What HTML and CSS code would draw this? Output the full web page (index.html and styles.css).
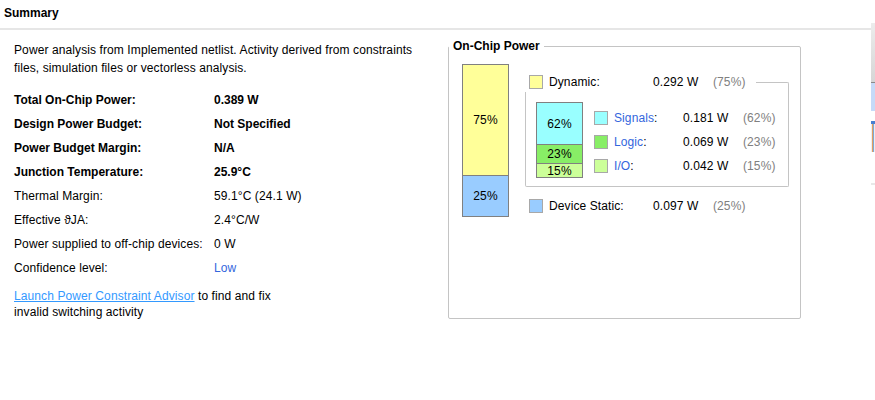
FILE: index.html
```html
<!DOCTYPE html>
<html>
<head>
<meta charset="utf-8">
<link rel="stylesheet" href="styles.css">
</head>
<body>
<div class="page">
  <div class="main">
    <div class="header">Summary</div>
    <div class="content">
      <div class="left">
        <p class="intro">Power analysis from Implemented netlist. Activity derived from constraints<br>files, simulation files or vectorless analysis.</p>
        <div class="rows">
          <div class="row bold"><span class="lbl">Total On-Chip Power:</span><span>0.389 W</span></div>
          <div class="row bold"><span class="lbl">Design Power Budget:</span><span>Not Specified</span></div>
          <div class="row bold"><span class="lbl">Power Budget Margin:</span><span>N/A</span></div>
          <div class="row bold"><span class="lbl">Junction Temperature:</span><span>25.9°C</span></div>
          <div class="row"><span class="lbl">Thermal Margin:</span><span>59.1°C (24.1 W)</span></div>
          <div class="row"><span class="lbl">Effective ϑJA:</span><span>2.4°C/W</span></div>
          <div class="row"><span class="lbl">Power supplied to off-chip devices:</span><span>0 W</span></div>
          <div class="row"><span class="lbl">Confidence level:</span><span class="blue">Low</span></div>
        </div>
        <p class="advisor"><a class="link" href="#">Launch Power Constraint Advisor</a> to find and fix<br>invalid switching activity</p>
      </div>
      <fieldset class="chip">
        <legend>On-Chip Power</legend>
        <div class="chip-body">
          <div class="bar big">
            <div class="seg yellow" style="height:110px">75%</div>
            <div class="seg lblue" style="height:41px">25%</div>
          </div>
          <div class="legend">
            <div class="lrow dyn">
              <span class="sw yellow"></span>
              <span class="name">Dynamic:</span>
              <span class="val">0.292 W</span>
              <span class="pct">(75%)</span>
              <span class="corner"></span>
            </div>
            <div class="dynbox">
              <div class="bar small">
                <div class="seg cyan" style="height:41px">62%</div>
                <div class="seg green" style="height:19px">23%</div>
                <div class="seg lgreen" style="height:14px">15%</div>
              </div>
              <div class="sublist">
                <div class="srow"><span class="sw cyan"></span><span class="sname"><span class="blue">Signals</span>:</span><span class="val">0.181 W</span><span class="pct">(62%)</span></div>
                <div class="srow"><span class="sw green"></span><span class="sname"><span class="blue">Logic</span>:</span><span class="val">0.069 W</span><span class="pct">(23%)</span></div>
                <div class="srow"><span class="sw lgreen"></span><span class="sname"><span class="blue">I/O</span>:</span><span class="val">0.042 W</span><span class="pct">(15%)</span></div>
              </div>
            </div>
            <div class="lrow static">
              <span class="sw lblue"></span>
              <span class="name">Device Static:</span>
              <span class="val">0.097 W</span>
              <span class="pct">(25%)</span>
            </div>
          </div>
        </div>
      </fieldset>
    </div>
  </div>
  <div class="side">
    <div class="s-gap1"></div>
    <div class="s-grad"></div>
    <div class="s-line"></div>
    <div class="s-sel"></div>
    <div class="s-gap2"></div>
    <div class="s-blue"></div>
    <div class="s-icon"></div>
    <div class="s-gap3"></div>
    <div class="s-bot"></div>
  </div>
</div>
</body>
</html>
```

FILE: styles.css
```css
* { box-sizing: border-box; }
html, body { margin: 0; padding: 0; background: #fff; }
body {
  font-family: "Liberation Sans", Arial, sans-serif;
  font-size: 12px;
  color: #000;
  letter-spacing: 0.1px;
}
.page { display: flex; width: 875px; height: 400px; }
.main { width: 871px; }
.header {
  height: 30px;
  line-height: 26px;
  padding-left: 4px;
  font-weight: bold;
  letter-spacing: 0;
  border-bottom: 2px solid #e6e6e6;
}
.content { display: flex; padding: 9px 0 0 14px; }
.left { width: 434px; padding-top: 2px; }
.intro { margin: 0; line-height: 18px; }
.rows { margin-top: 11px; }
.row { display: flex; height: 24px; line-height: 24px; }
.row.bold { font-weight: bold; letter-spacing: 0; }
.lbl { width: 200px; }
.blue { color: #3366dd; }
.advisor { margin: 8px 0 0; line-height: 16px; }
.link { color: #3399ff; text-decoration: underline; }

.chip {
  margin: 0;
  padding: 0;
  width: 353px;
  height: 280px;
  border: 1px solid #c4c4c4;
  border-radius: 2px;
  min-width: 0;
}
.chip legend {
  padding: 0 4px;
  margin-left: 0;
  font-weight: bold;
  letter-spacing: 0;
  line-height: 15px;
}
.chip-body { display: flex; align-items: flex-start; padding: 10px 0 0 13px; }
.bar { border: 1px solid #808080; width: 47px; }
.seg { display: flex; align-items: center; justify-content: center; }
.seg + .seg { border-top: 1px solid #808080; }
.yellow { background: #ffff99; }
.lblue { background: #99ccff; }
.cyan { background: #99ffff; }
.green { background: #88ee66; }
.lgreen { background: #ccff99; }

.legend { margin: 11px 0 0 16px; width: 264px; }
.lrow { display: flex; align-items: flex-start; padding-left: 4px; line-height: 14px; }
.lrow.dyn { height: 17px; }
.sw { width: 14px; height: 14px; border: 1px solid #a8a8a8; flex: none; }
.name { margin-left: 6px; width: 104px; }
.val { width: 60px; }
.pct { color: #808080; }
.corner {
  flex: 1;
  align-self: stretch;
  margin: 7px 0 0 10px;
  border-top: 1px solid #c4c4c4;
  border-right: 1px solid #c4c4c4;
  border-top-right-radius: 2px;
}
.dynbox {
  display: flex;
  align-items: flex-start;
  border: 1px solid #c4c4c4;
  border-top: none;
  border-radius: 0 0 2px 2px;
  padding: 10px 0 8px 10px;
}
.small { width: 47px; }
.sublist { margin: 4px 0 0 11px; }
.srow { display: flex; align-items: center; height: 24px; }
.sname { margin-left: 6px; width: 69px; }
.lrow.static { margin-top: 12px; line-height: 15px; }

.side { width: 4px; display: flex; flex-direction: column; }
.s-gap1 { height: 23px; }
.s-grad { height: 59px; background: linear-gradient(#ececec, #d6d6d6); }
.s-line { height: 1px; background: #8a8a8a; }
.s-sel { height: 28px; background: #c6daf8; }
.s-gap2 { height: 10px; }
.s-blue { height: 3px; background: #4a7fd0; }
.s-icon { height: 28px; background: linear-gradient(90deg, #eeeeee 0, #eeeeee 1px, #e0a060 1px, #e0a060 2px, #7fa6d8 2px, #7fa6d8 3px, #eeeeee 3px); }
.s-gap3 { height: 31px; }
.s-bot { height: 2px; background: #e8e8e8; }
```
